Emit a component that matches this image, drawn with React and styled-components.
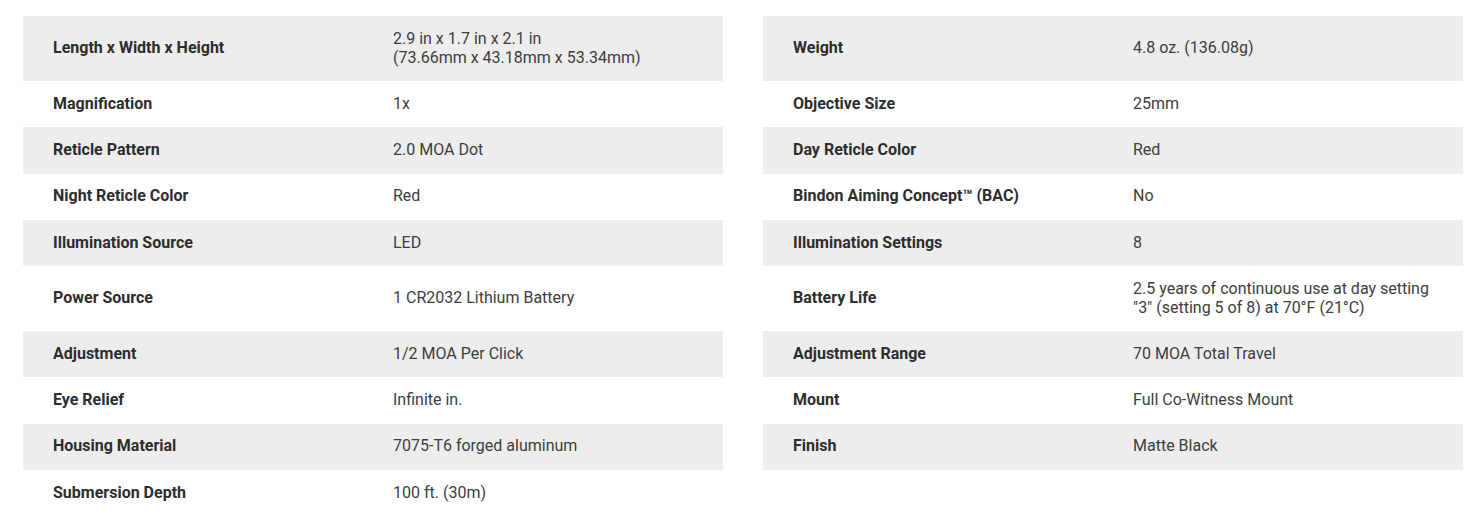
import React from "react";
import styled, { createGlobalStyle } from "styled-components";

const GlobalStyle = createGlobalStyle`
  body {
    margin: 0;
    background: #ffffff;
    font-family: "Roboto", "Liberation Sans", sans-serif;
  }
`;

const Page = styled.div`
  padding: 16px 15px 0 23px;
`;

const SpecGrid = styled.div`
  display: grid;
  grid-template-columns: 700px 700px;
  column-gap: 40px;
`;

const SpecRow = styled.div`
  display: grid;
  grid-template-columns: 340px 1fr;
  align-items: center;
  padding: 13.75px 30px;
  background-color: ${(p) => (p.$shaded ? "#ededed" : "#ffffff")};
`;

const Label = styled.div`
  font-size: 16px;
  line-height: 18.75px;
  font-weight: 700;
  color: #2d2d2d;
`;

const Value = styled.div`
  font-size: 16px;
  line-height: 18.75px;
  color: #3d3d3d;
`;

const specs = [
  ["Length x Width x Height", "2.9 in x 1.7 in x 2.1 in\n(73.66mm x 43.18mm x 53.34mm)"],
  ["Weight", "4.8 oz. (136.08g)"],
  ["Magnification", "1x"],
  ["Objective Size", "25mm"],
  ["Reticle Pattern", "2.0 MOA Dot"],
  ["Day Reticle Color", "Red"],
  ["Night Reticle Color", "Red"],
  ["Bindon Aiming Concept™ (BAC)", "No"],
  ["Illumination Source", "LED"],
  ["Illumination Settings", "8"],
  ["Power Source", "1 CR2032 Lithium Battery"],
  ["Battery Life", "2.5 years of continuous use at day setting\n\"3\" (setting 5 of 8) at 70°F (21°C)"],
  ["Adjustment", "1/2 MOA Per Click"],
  ["Adjustment Range", "70 MOA Total Travel"],
  ["Eye Relief", "Infinite in."],
  ["Mount", "Full Co-Witness Mount"],
  ["Housing Material", "7075-T6 forged aluminum"],
  ["Finish", "Matte Black"],
  ["Submersion Depth", "100 ft. (30m)"],
];

const App = () => {
  return (
    <Page>
      <GlobalStyle />
      <SpecGrid>
        {specs.map(([label, value], i) => (
          <SpecRow key={label} $shaded={Math.floor(i / 2) % 2 === 0}>
            <Label>{label}</Label>
            <Value>
              {value.split("\n").map((line) => (
                <div key={line}>{line}</div>
              ))}
            </Value>
          </SpecRow>
        ))}
      </SpecGrid>
    </Page>
  );
};

export default App;
